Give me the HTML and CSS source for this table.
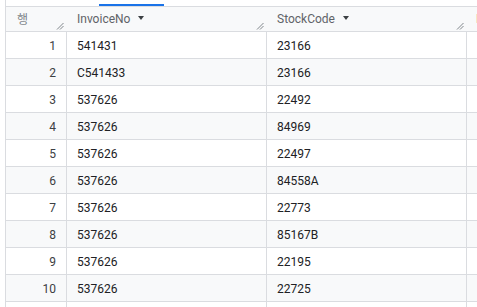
FILE: index.html
```html
<!DOCTYPE html>
<html>
<head>
<meta charset="utf-8">
<link rel="stylesheet" href="styles.css">
</head>
<body>
<div class="page">
  <div class="tabs"><span class="tab-ind"></span></div>
  <div class="grid">
    <div class="row head">
      <div class="cell num hcell"><span class="htext kor">행</span><svg class="handle" viewBox="0 0 8 8"><path d="M1 7.5 L7.5 1 M4 7.5 L7.5 4"/></svg></div>
      <div class="cell col hcell"><span class="htext">InvoiceNo</span><span class="caret"></span><svg class="handle" viewBox="0 0 8 8"><path d="M1 7.5 L7.5 1 M4 7.5 L7.5 4"/></svg></div>
      <div class="cell col hcell"><span class="htext">StockCode</span><span class="caret"></span><svg class="handle" viewBox="0 0 8 8"><path d="M1 7.5 L7.5 1 M4 7.5 L7.5 4"/></svg></div>
      <div class="cell rest hcell"><span class="htext">Description</span></div>
    </div>
    <div class="row"><div class="cell num">1</div><div class="cell col">541431</div><div class="cell col">23166</div><div class="cell rest"></div></div>
    <div class="row alt"><div class="cell num">2</div><div class="cell col">C541433</div><div class="cell col">23166</div><div class="cell rest"></div></div>
    <div class="row"><div class="cell num">3</div><div class="cell col">537626</div><div class="cell col">22492</div><div class="cell rest"></div></div>
    <div class="row alt"><div class="cell num">4</div><div class="cell col">537626</div><div class="cell col">84969</div><div class="cell rest"></div></div>
    <div class="row"><div class="cell num">5</div><div class="cell col">537626</div><div class="cell col">22497</div><div class="cell rest"></div></div>
    <div class="row alt"><div class="cell num">6</div><div class="cell col">537626</div><div class="cell col">84558A</div><div class="cell rest"></div></div>
    <div class="row"><div class="cell num">7</div><div class="cell col">537626</div><div class="cell col">22773</div><div class="cell rest"></div></div>
    <div class="row alt"><div class="cell num">8</div><div class="cell col">537626</div><div class="cell col">85167B</div><div class="cell rest"></div></div>
    <div class="row"><div class="cell num">9</div><div class="cell col">537626</div><div class="cell col">22195</div><div class="cell rest"></div></div>
    <div class="row alt"><div class="cell num">10</div><div class="cell col">537626</div><div class="cell col">22725</div><div class="cell rest"></div></div>
    <div class="row"><div class="cell num"></div><div class="cell col"></div><div class="cell col"></div><div class="cell rest"></div></div>
  </div>
</div>
</body>
</html>
```
FILE: styles.css
```css
html, body {
  margin: 0;
  padding: 0;
  background: #ffffff;
  overflow: hidden;
}
body {
  font-family: Roboto, "Noto Sans CJK KR", sans-serif;
  font-size: 12px;
  color: #202124;
}
.page {
  width: 477px;
  height: 307px;
  overflow: hidden;
}
.tabs {
  height: 6px;
  margin-left: 5px;
  border-left: 1px solid #dadce0;
  position: relative;
}
.tab-ind {
  position: absolute;
  left: 93px;
  bottom: 0;
  width: 65px;
  height: 2px;
  background: #1a73e8;
}
.grid {
  margin-left: 5px;
  border-left: 1px solid #dadce0;
  border-top: 1px solid #dadce0;
  width: 600px;
}
.row {
  display: flex;
  height: 27px;
  box-sizing: border-box;
  border-bottom: 1px solid #dadce0;
}
.row.alt {
  background: #f8f9fa;
}
.row.head {
  height: 25px;
  background: #f8f9fa;
}
.cell {
  box-sizing: border-box;
  border-right: 1px solid #dadce0;
  display: flex;
  align-items: center;
  padding-top: 2px;
  white-space: nowrap;
  position: relative;
}
.num {
  width: 61px;
  justify-content: flex-end;
  padding-right: 10px;
  color: #3c4043;
}
.col {
  width: 200px;
  padding-left: 10px;
}
.rest {
  flex: 1;
  padding-left: 9px;
  border-right: none;
}
.hcell {
  border-right-color: transparent;
  padding-top: 0;
  padding-bottom: 1px;
  color: #5f6368;
}
.hcell.num {
  justify-content: flex-start;
  padding-left: 11px;
}
.kor {
  color: #80868b;
  font-size: 12px;
}
.caret {
  width: 0;
  height: 0;
  margin-left: 8px;
  margin-top: -1px;
  border-left: 3px solid transparent;
  border-right: 3px solid transparent;
  border-top: 4px solid #3c4043;
}
.handle {
  position: absolute;
  right: 2px;
  bottom: 1px;
  width: 8px;
  height: 8px;
  fill: none;
  stroke: #80868b;
  stroke-width: 1;
}
```
